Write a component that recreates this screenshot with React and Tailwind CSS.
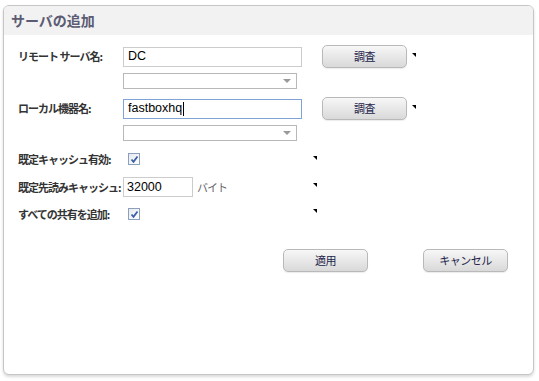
import React from "react";

const jp = { fontFamily: '"Noto Sans CJK JP", "Noto Sans", sans-serif' };
const latin = { fontFamily: '"Liberation Sans", Arial, sans-serif' };

function Mark() {
  return <span className="block w-0 h-0 border-t-[4px] border-l-[4px] border-t-black border-l-transparent" />;
}

function Btn({ label, className = "" }) {
  return (
    <button
      style={jp}
      className={`h-[23px] rounded-[5px] border border-[#b9b9b9] bg-gradient-to-b from-[#f7f7f7] to-[#d9d9d9] text-[11px] text-[#23234a] tracking-[-0.5px] shadow-[0_1px_1px_rgba(0,0,0,0.08)] ${className}`}
    >
      {label}
    </button>
  );
}

function Select() {
  return (
    <div className="ml-[105px] w-[174px] h-[16px] border border-[#b8b8b8] bg-white flex items-center justify-end pr-[5px]">
      <span className="block w-0 h-0 border-t-[4px] border-x-[4px] border-t-[#9a9a9a] border-x-transparent" />
    </div>
  );
}

function Check() {
  return (
    <span className="w-[12px] h-[12px] border border-[#8aa0bb] bg-gradient-to-br from-[#e6e9ef] to-white flex items-center justify-center">
      <svg width="9" height="9" viewBox="0 0 9 9">
        <path d="M1.5 4.5 L3.5 6.8 L7.5 1.5" fill="none" stroke="#3a5fa8" strokeWidth="1.8" />
      </svg>
    </span>
  );
}

function Label({ children }) {
  return (
    <span style={jp} className="w-[105px] shrink-0 text-[11px] font-bold text-[#333] tracking-[-1px] whitespace-nowrap">
      {children}
    </span>
  );
}

export default function App() {
  return (
    <div className="w-[539px] h-[381px] bg-white relative overflow-hidden">
      <div className="h-[5px]" />
      <div className="ml-[3px] w-[531px] h-[370px] border border-[#c6c6c6] rounded-[6px] bg-white shadow-[0_2px_3px_rgba(0,0,0,0.15)] overflow-hidden">
        <div className="h-[29px] bg-[#f2f2f2] flex items-center pl-[7px]">
          <span style={jp} className="text-[14px] font-bold text-[#5b5b73]">サーバの追加</span>
        </div>

        <div className="pl-[14px] pt-[10px]">
          {/* remote server */}
          <div className="h-[23px] flex items-center">
            <Label>リモート サーバ名:</Label>
            <div style={latin} className="w-[179px] h-[20px] border border-[#cccccc] flex items-center pl-[4px] text-[12.5px] text-black">DC</div>
            <Btn label="調査" className="ml-[20px] w-[85px]" />
            <div className="self-start mt-[8px] ml-[5px]"><Mark /></div>
          </div>
          <div className="mt-[5px]"><Select /></div>

          {/* local machine */}
          <div className="mt-[8px] h-[23px] flex items-center">
            <Label>ローカル機器名:</Label>
            <div style={latin} className="w-[179px] h-[20px] border border-[#7fa3d4] flex items-center pl-[4px] text-[12.5px] text-black">
              fastboxhq<span className="inline-block w-px h-[14px] bg-black ml-px" />
            </div>
            <Btn label="調査" className="ml-[20px] w-[85px]" />
            <div className="self-start mt-[8px] ml-[5px]"><Mark /></div>
          </div>
          <div className="mt-[5px]"><Select /></div>

          {/* default cache */}
          <div className="mt-[7px] h-[22px] flex items-center">
            <Label>既定キャッシュ有効:</Label>
            <div className="w-[190px] shrink-0 pl-[5px]"><Check /></div>
            <div className="self-start mt-[8px]"><Mark /></div>
          </div>

          {/* read ahead cache */}
          <div className="mt-[6px] h-[22px] flex items-center">
            <Label>既定先読みキャッシュ:</Label>
            <div className="w-[190px] shrink-0 flex items-center">
              <div style={latin} className="w-[70px] h-[20px] border border-[#cccccc] flex items-center pl-[3px] text-[12.5px] text-black">32000</div>
              <span style={jp} className="ml-[4px] text-[11px] text-[#666] tracking-[-1px]">バイト</span>
            </div>
            <div className="self-start mt-[7px]"><Mark /></div>
          </div>

          {/* add all shares */}
          <div className="mt-[5px] h-[22px] flex items-center">
            <Label>すべての共有を追加:</Label>
            <div className="w-[190px] shrink-0 pl-[5px]"><Check /></div>
            <div className="self-start mt-[6px]"><Mark /></div>
          </div>

          <div className="mt-[24px] flex pl-[265px] gap-[55px]">
            <Btn label="適用" className="w-[85px]" />
            <Btn label="キャンセル" className="w-[85px]" />
          </div>
        </div>
      </div>
    </div>
  );
}
